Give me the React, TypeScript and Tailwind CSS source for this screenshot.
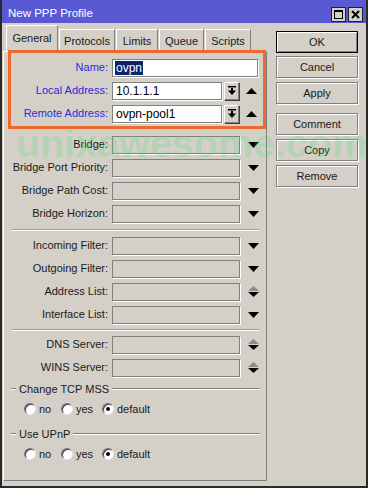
import React from 'react';

const font = { fontFamily: '"Liberation Sans", Arial, sans-serif' };

function DownArrow() {
  return (
    <svg width="11" height="6" viewBox="0 0 11 6">
      <polygon points="0,0 11,0 5.5,6" fill="#000" />
    </svg>
  );
}

function UpArrow() {
  return (
    <svg width="11" height="6" viewBox="0 0 11 6">
      <polygon points="0,6 11,6 5.5,0" fill="#000" />
    </svg>
  );
}

function UpDown() {
  return (
    <div className="flex flex-col items-center gap-[1px]">
      <svg width="11" height="5" viewBox="0 0 11 5">
        <polygon points="0,5 11,5 5.5,0" fill="#8c8c8c" />
      </svg>
      <svg width="11" height="5" viewBox="0 0 11 5">
        <polygon points="0,0 11,0 5.5,5" fill="#000" />
      </svg>
    </div>
  );
}

function DropButton() {
  return (
    <div className="ml-[2px] flex h-[18px] w-[15px] items-center justify-center border border-t-white border-l-white border-r-[#808080] border-b-[#808080] bg-[#d4d0c8] shadow-[1px_1px_0_#404040]">
      <svg width="8" height="9" viewBox="0 0 8 9">
        <rect x="0" y="0" width="8" height="1.5" fill="#000" />
        <rect x="3" y="2" width="2" height="3" fill="#000" />
        <polygon points="0,4.5 8,4.5 4,9" fill="#000" />
      </svg>
    </div>
  );
}

function Field({ label, kind }: { label: string; kind: 'down' | 'updown' }) {
  return (
    <div className="flex h-[23px] items-center">
      <div className="w-[108px] pr-[4px] text-right text-[11px] text-[#1a1a1a]">{label}</div>
      <div className="h-[18px] w-[128px] border border-[#808080] bg-[#d4d0c8] shadow-[1px_1px_0_#fff]" />
      <div className="flex flex-1 items-center justify-center pl-[1px]">
        {kind === 'down' ? <DownArrow /> : <UpDown />}
      </div>
    </div>
  );
}

function Separator({ top, bottom }: { top: number; bottom: number }) {
  return (
    <div style={{ paddingTop: top, paddingBottom: bottom }} className="pl-[8px] pr-[7px]">
      <div className="h-[1px] bg-[#9c9c9c]" />
      <div className="h-[1px] bg-white" />
    </div>
  );
}

function GroupHeader({ title }: { title: string }) {
  return (
    <div className="flex h-[16px] items-center pl-[7px] pr-[6px]">
      <div className="w-[5px]">
        <div className="h-[1px] bg-[#808080]" />
        <div className="h-[1px] bg-white" />
      </div>
      <span className="px-[3px] text-[11px] text-[#1a1a1a]">{title}</span>
      <div className="flex-1">
        <div className="h-[1px] bg-[#808080]" />
        <div className="h-[1px] bg-white" />
      </div>
    </div>
  );
}

function Radio({ label, checked, width }: { label: string; checked?: boolean; width?: string }) {
  return (
    <div className={`flex items-center gap-[3px] ${width ?? ''}`}>
      <div className="flex h-[12px] w-[12px] items-center justify-center rounded-full border border-t-[#707070] border-l-[#707070] border-r-[#e8e8e8] border-b-[#e8e8e8] bg-white shadow-[inset_1px_1px_0_#404040]">
        {checked && <div className="h-[4px] w-[4px] rounded-full bg-black" />}
      </div>
      <span className="text-[11px] text-[#1a1a1a]">{label}</span>
    </div>
  );
}

function RadioRow() {
  return (
    <div className="flex h-[24px] items-center pl-[20px]">
      <Radio label="no" width="w-[37px]" />
      <Radio label="yes" width="w-[41px]" />
      <Radio label="default" checked />
    </div>
  );
}

function Btn({ label, primary, className }: { label: string; primary?: boolean; className?: string }) {
  return (
    <div
      className={`flex h-[22px] items-center justify-center text-[11px] text-[#1a1a1a] ${
        primary
          ? 'border border-black shadow-[inset_1px_1px_0_#fff,inset_-1px_-1px_0_#808080]'
          : 'border border-[#808080] shadow-[1px_1px_0_#fff,inset_1px_1px_0_#fff]'
      } ${className ?? ''}`}
    >
      {label}
    </div>
  );
}

const tabs = [
  { name: 'General', w: 'w-[52px]' },
  { name: 'Protocols', w: 'w-[56px]' },
  { name: 'Limits', w: 'w-[42px]' },
  { name: 'Queue', w: 'w-[45px]' },
  { name: 'Scripts', w: 'w-[46px]' },
];

export default function App() {
  return (
    <div style={font} className="relative flex h-[488px] w-[368px] flex-col overflow-hidden border-x-2 border-b-2 border-[#2a2a2a] bg-[#d4d0c8]">
      {/* title bar */}
      <div className="flex h-[23px] items-center justify-between bg-[#5959d4] pl-[6px] pr-[3px] pt-[5px]">
        <span className="text-[11.5px] text-white">New PPP Profile</span>
        <div className="flex gap-[2px]">
          <div className="flex h-[15px] w-[15px] items-center justify-center border border-[#202020] bg-[#d4d0c8]">
            <div className="h-[9px] w-[9px] border border-t-2 border-black" />
          </div>
          <div className="flex h-[15px] w-[15px] items-center justify-center border border-[#202020] bg-[#d4d0c8]">
            <svg width="9" height="9" viewBox="0 0 9 9">
              <path d="M1 1 L8 8 M8 1 L1 8" stroke="#000" strokeWidth="2" />
            </svg>
          </div>
        </div>
      </div>

      <div className="flex flex-1">
        {/* left: tabs */}
        <div className="ml-[1px] flex w-[264px] flex-col pt-[3px]">
          <div className="flex h-[25px] items-end gap-[1px] pl-[3px]">
            {tabs.map((t, i) =>
              i === 0 ? (
                <div
                  key={t.name}
                  className={`${t.w} relative z-10 flex h-[26px] items-center justify-center border-l border-t border-r border-l-white border-t-white border-r-[#808080] bg-[#d4d0c8] pb-[1px] text-[11px] text-[#1a1a1a]`}
                >
                  {t.name}
                </div>
              ) : (
                <div
                  key={t.name}
                  className={`${t.w} flex h-[22px] items-center justify-center border-l border-t border-r border-l-white border-t-white border-r-[#808080] bg-[#d4d0c8] pt-[2px] text-[11px] text-[#1a1a1a]`}
                >
                  {t.name}
                </div>
              ),
            )}
          </div>
          <div className="flex h-[430px] flex-col border border-t-white border-l-white border-r-[#808080] border-b-[#808080]">
            {/* highlighted rows */}
            <div className="relative z-20 -mt-[2px] ml-[4px] border-[3px] border-[#ec6a2c] pb-[1px] pt-[3px]">
              <div className="flex h-[23px] items-center">
                <div className="w-[101px] pr-[4px] text-right text-[11px] text-[#2b2bdc]">Name:</div>
                <div className="flex h-[18px] w-[146px] items-center border border-[#808080] bg-white pl-[2px] shadow-[1px_1px_0_#fff]">
                  <span className="bg-[#0a246a] px-[1px] text-[12px] leading-[14px] text-white">ovpn</span>
                </div>
              </div>
              <div className="flex h-[23px] items-center">
                <div className="w-[101px] pr-[4px] text-right text-[11px] text-[#2b2bdc]">Local Address:</div>
                <div className="flex h-[18px] w-[110px] items-center border border-[#808080] bg-white pl-[3px] text-[12px] text-black shadow-[1px_1px_0_#fff]">
                  10.1.1.1
                </div>
                <DropButton />
                <div className="flex flex-1 items-center justify-center">
                  <UpArrow />
                </div>
              </div>
              <div className="flex h-[23px] items-center">
                <div className="w-[101px] pr-[4px] text-right text-[11px] text-[#2b2bdc]">Remote Address:</div>
                <div className="flex h-[18px] w-[110px] items-center border border-[#808080] bg-white pl-[3px] text-[12px] text-black shadow-[1px_1px_0_#fff]">
                  ovpn-pool1
                </div>
                <DropButton />
                <div className="flex flex-1 items-center justify-center">
                  <UpArrow />
                </div>
              </div>
            </div>

            <div className="mt-[4px]">
              <Field label="Bridge:" kind="down" />
              <Field label="Bridge Port Priority:" kind="down" />
              <Field label="Bridge Path Cost:" kind="down" />
              <Field label="Bridge Horizon:" kind="down" />
            </div>
            <Separator top={4} bottom={3} />
            <Field label="Incoming Filter:" kind="down" />
            <Field label="Outgoing Filter:" kind="down" />
            <Field label="Address List:" kind="updown" />
            <Field label="Interface List:" kind="down" />
            <Separator top={3} bottom={2} />
            <Field label="DNS Server:" kind="updown" />
            <Field label="WINS Server:" kind="updown" />

            <div className="mt-[2px]">
              <GroupHeader title="Change TCP MSS" />
              <RadioRow />
            </div>
            <div className="mt-[5px]">
              <GroupHeader title="Use UPnP" />
              <RadioRow />
            </div>
          </div>
        </div>

        {/* right: buttons */}
        <div className="ml-[9px] mt-[8px] flex w-[82px] flex-col">
          <Btn label="OK" primary />
          <Btn label="Cancel" className="mt-[3px]" />
          <Btn label="Apply" className="mt-[4px]" />
          <Btn label="Comment" className="mt-[9px]" />
          <Btn label="Copy" className="mt-[4px]" />
          <Btn label="Remove" className="mt-[4px]" />
        </div>
      </div>

      {/* watermark */}
      <div className="pointer-events-none absolute left-[14px] top-[123px] z-30 text-[39.5px] font-bold leading-[40px] text-[rgba(70,220,110,0.22)]">
        unixawesome.com
      </div>
    </div>
  );
}
